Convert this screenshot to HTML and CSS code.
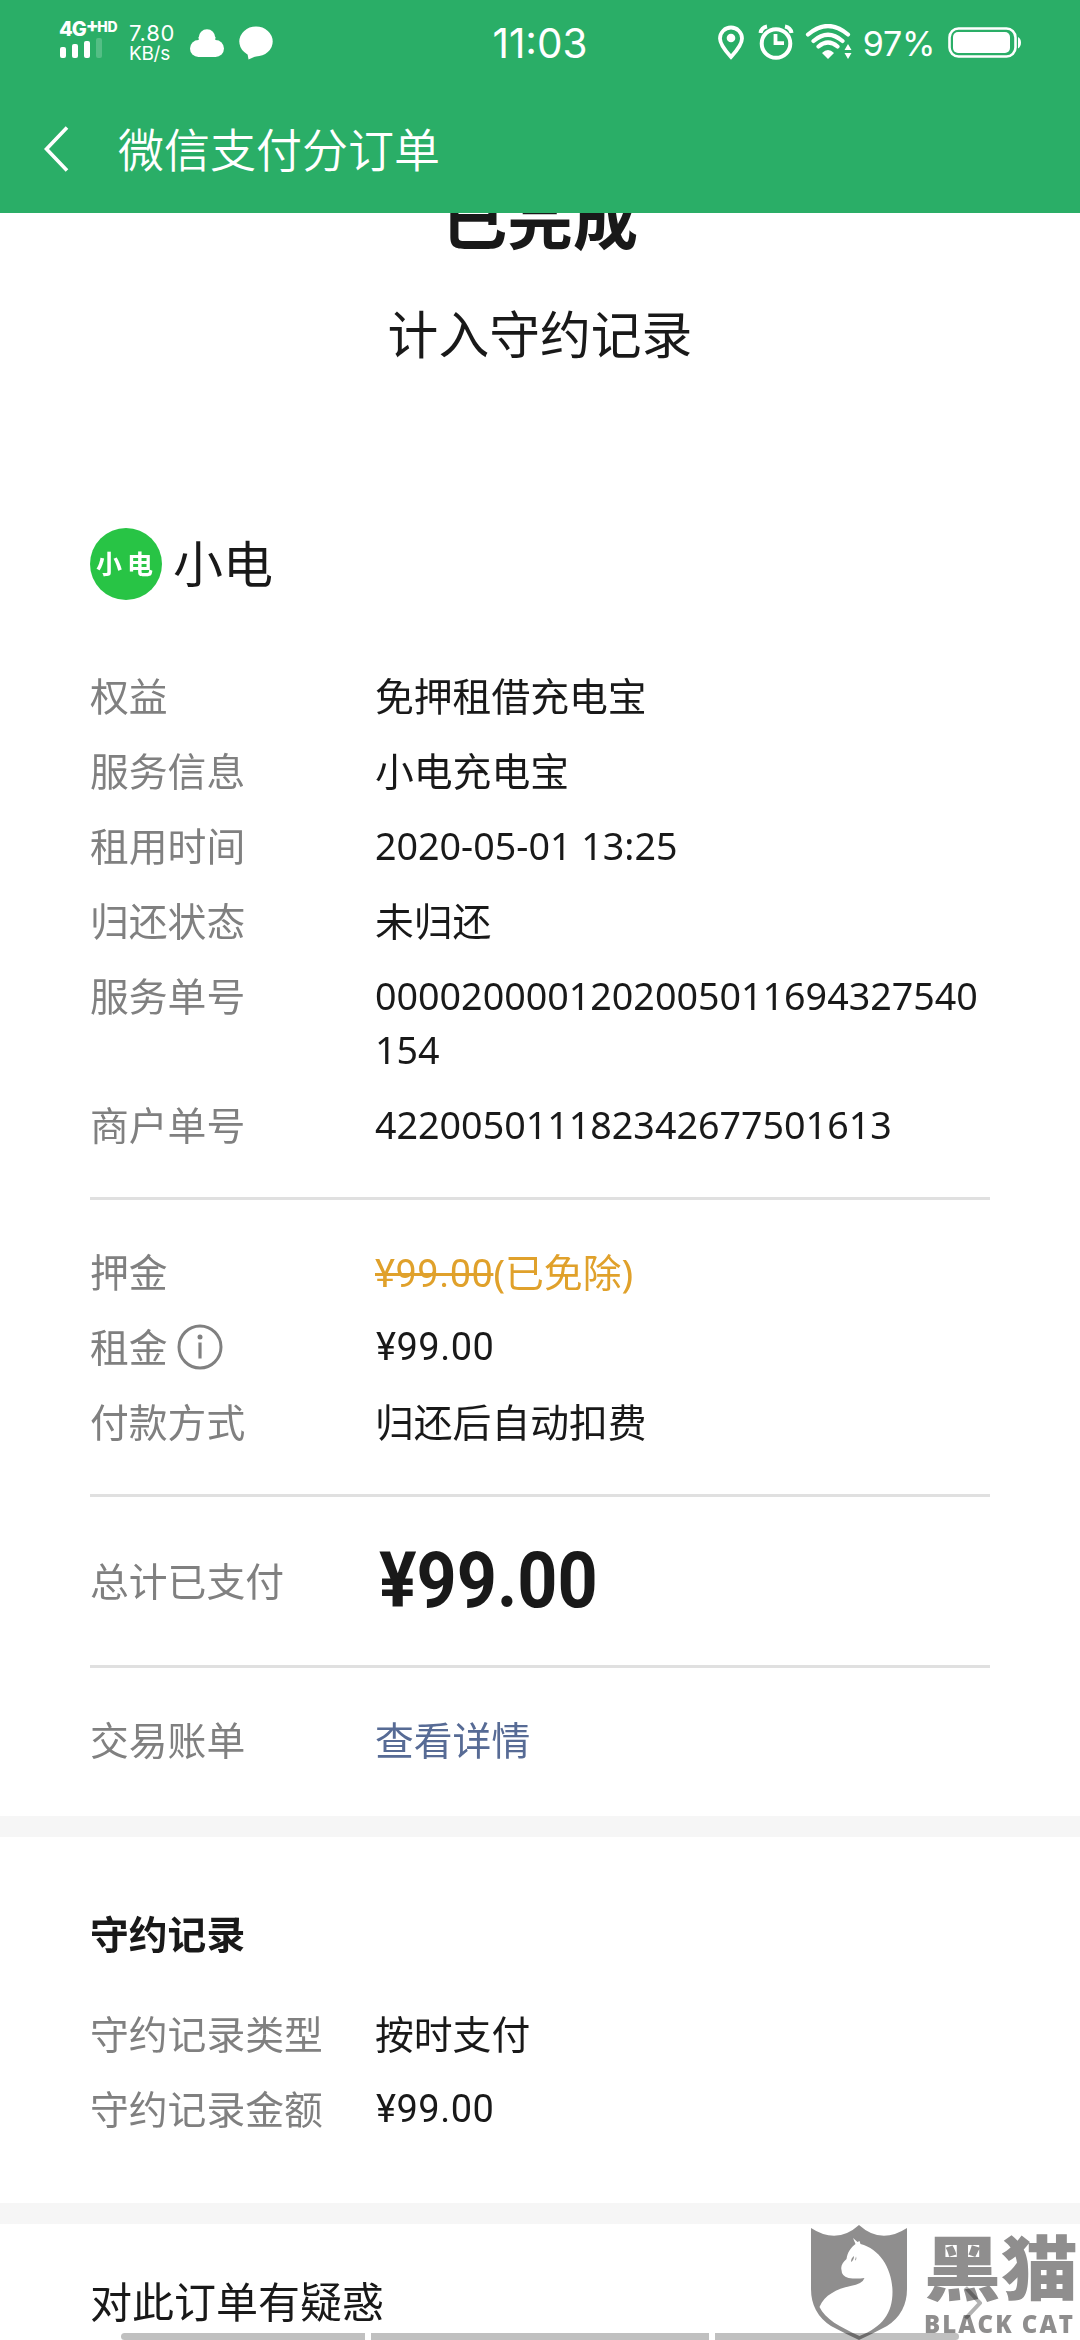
FILE: index.html
```html
<!DOCTYPE html>
<html lang="zh-CN">
<head>
<meta charset="utf-8">
<title>微信支付分订单</title>
<link rel="stylesheet" href="styles.css">
</head>
<body>
<div class="screen">
  <header class="header">
    <div class="status">
      <div class="status-side">
        <div class="signal">
          <div class="network">4G<span class="plus">+</span><span class="hd">HD</span></div>
          <svg class="bars" width="44" height="20" viewBox="0 0 44 20" fill="#fff"><rect x="1" y="9" width="6" height="11" rx="2"/><rect x="13" y="6" width="6" height="14" rx="2"/><rect x="25" y="3" width="6" height="17" rx="2"/><rect x="37" y="0" width="6" height="20" rx="2" opacity=".2"/></svg>
        </div>
        <div class="speed"><span class="rate">7.80</span><span class="unit">KB/s</span></div>
        <svg class="cloud" width="34" height="28" viewBox="0 0 34 28" fill="#fff"><circle cx="17" cy="8.5" r="8.3"/><rect x="0" y="11" width="34" height="17" rx="8.5"/><rect x="8.7" y="8" width="16.6" height="12"/></svg>
        <svg class="bubble" width="34" height="34" viewBox="0 0 34 34" fill="#fff"><ellipse cx="17" cy="15.500" rx="16.700" ry="15"/><path d="M8 25l1.500 8.500 9-4z"/></svg>
      </div>
      <div class="clock">11:03</div>
      <div class="status-side status-right">
        <svg class="pin" width="28" height="36" viewBox="0 0 28 36" fill="none"><path d="M14 32C9.500 27 3 20 3 13.500a11 11 0 0 1 22 0C25 20 18.500 27 14 32z" stroke="#fff" stroke-width="3.800"/><circle cx="14" cy="13" r="4.300" fill="#fff"/></svg>
        <svg class="alarm" width="36" height="36" viewBox="0 0 36 36" fill="none" stroke="#fff"><circle cx="18" cy="19.500" r="14.300" stroke-width="4"/><path d="M17.500 10v9.200H26" stroke-width="3.800"/><path d="M2.500 9Q3.500 3.500 9 2.500M27 2.500q5.500 1 6.500 6.500" stroke-width="4"/></svg>
        <svg class="wifi" width="48" height="36" viewBox="0 0 48 36" fill="none" stroke="#fff" stroke-width="4.200" stroke-linecap="round"><path d="M3 10.500Q23 -6.500 43 10.500M8.500 17Q23 4.500 37.500 17M13.500 22.500Q23 14.500 32.500 22.500"/><path d="M17 29q6-6 12 0l-6 6z" fill="#fff" stroke="none"/><path d="M43 20l3.500 6h-7zM43 35l3.500-6h-7z" fill="#fff" stroke="none"/></svg>
        <span class="percent">97%</span>
        <svg class="battery" width="73" height="32" viewBox="0 0 73 32" fill="none"><rect x="1.500" y="1.500" width="66" height="28" rx="9" stroke="#fff" stroke-width="2.600"/><rect x="5" y="5" width="57" height="21" rx="5" fill="#fff"/><path d="M70 10q3 1.500 3 5.500t-3 6z" fill="#fff"/></svg>
      </div>
    </div>
    <div class="nav">
      <svg class="back" width="26" height="46" viewBox="0 0 26 46" fill="none" stroke="#fff" stroke-width="3.600"><path d="M23 1.500L2.500 23 23 44.500"/></svg>
      <h1 class="title">微信支付分订单</h1>
    </div>
  </header>

  <main class="page">
    <section class="summary">
      <h2 class="state">已完成</h2>
      <p class="note">计入守约记录</p>
    </section>

    <section class="order">
      <div class="merchant"><span class="logo">小电</span><span class="merchant-name">小电</span></div>
      <dl class="rows">
        <div class="row"><dt>权益</dt><dd>免押租借充电宝</dd></div>
        <div class="row"><dt>服务信息</dt><dd>小电充电宝</dd></div>
        <div class="row"><dt>租用时间</dt><dd class="num">2020-05-01 13:25</dd></div>
        <div class="row"><dt>归还状态</dt><dd>未归还</dd></div>
        <div class="row"><dt>服务单号</dt><dd class="num">0000200001202005011694327540154</dd></div>
        <div class="row"><dt>商户单号</dt><dd class="num">422005011182342677501613</dd></div>
      </dl>
      <dl class="rows ruled">
        <div class="row"><dt>押金</dt><dd class="waived"><s class="money">¥99.00</s>(已免除)</dd></div>
        <div class="row"><dt class="with-info">租金<svg class="info" width="46" height="46" viewBox="0 0 46 46" fill="none" stroke="#808080"><circle cx="23" cy="23" r="21" stroke-width="3"/><path d="M23 18.500v16" stroke-width="3.200"/><circle cx="23" cy="13" r="2.500" fill="#808080" stroke="none"/></svg></dt><dd class="money">¥99.00</dd></div>
        <div class="row"><dt>付款方式</dt><dd>归还后自动扣费</dd></div>
      </dl>
      <dl class="rows ruled total">
        <div class="row"><dt>总计已支付</dt><dd class="amount"><span class="amount-text">¥99.00</span></dd></div>
      </dl>
      <dl class="rows ruled bill">
        <div class="row"><dt>交易账单</dt><dd class="link">查看详情</dd></div>
      </dl>
    </section>

    <section class="record">
      <h3 class="record-title">守约记录</h3>
      <dl class="rows">
        <div class="row"><dt>守约记录类型</dt><dd>按时支付</dd></div>
        <div class="row"><dt>守约记录金额</dt><dd class="money">¥99.00</dd></div>
      </dl>
    </section>

    <section class="help">
      <span>对此订单有疑惑</span>
      <svg class="arrow" width="18" height="34" viewBox="0 0 18 34" fill="none" stroke="#b2b2b2" stroke-width="4"><path d="M1.500 1.500L16 17 1.500 32.500"/></svg>
    </section>
  </main>

  <div class="gesture"><i class="g1"></i><i class="g2"></i><i class="g3"></i></div>

  <div class="watermark">
    <svg class="shield" width="98" height="115" viewBox="0 0 98 115"><path d="M1 3Q27 20 49 0q22 20 48 3v61q0 24-20 37-15 8-28 14-13-6-28-14Q1 88 1 64z" fill="#8f8e8e"/><path d="M43 13l4.500 4 2-1 1 3c20 5 32 26 32 48 0 21-10 35-33 44C30 102 15 94 9.500 82c5-12 17-18 31-21q12-2 14-8-8 1-16 0-7-2-7-8c-1-4 1-7 5-11 1-7 4-11 9-15z" fill="#fff"/><path d="M41 37q0-4 3-6 0 4-3 6zM45 35.500q2-1 1-4z" fill="#8f8e8e"/></svg>
    <div class="brand"><span class="brand-cn">黑猫</span><span class="brand-en">BLACK CAT</span></div>
  </div>
</div>
</body>
</html>
```
FILE: styles.css
```css
* { box-sizing: border-box; }
body { margin: 0; background: #fff; }
h1, h2, h3, p, dl, dd { margin: 0; font-size: inherit; font-weight: 400; }

.screen {
  position: relative;
  width: 1080px;
  height: 2340px;
  overflow: hidden;
  display: flex;
  flex-direction: column;
  background: #fff;
  color: #191919;
  font-family: "Noto Sans", "Noto Sans CJK SC", sans-serif;
  font-size: 38.8px;
  line-height: 54px;
}

/* header */
.header { height: 213px; flex: none; background: #2aae67; color: #fff; position: relative; z-index: 1; }
.status {
  height: 84px;
  display: grid;
  grid-template-columns: 1fr auto 1fr;
  padding: 0 59px;
  font-family: Inter, sans-serif;
}
.status-side { display: flex; align-items: flex-start; }
.status-right { justify-content: flex-end; }
.signal { width: 58px; padding-top: 20px; display: flex; flex-direction: column; }
.network { font-size: 20px; line-height: 18px; font-weight: 800; letter-spacing: -1px; white-space: nowrap; height: 18px; display: flex; }
.plus { font-size: 19px; line-height: 12px; letter-spacing: -1.5px; }
.hd { font-size: 14px; line-height: 13px; letter-spacing: -.3px; }
.speed { margin-left: 12px; padding-top: 23px; width: 50px; display: flex; flex-direction: column; }
.rate { font-size: 22px; line-height: 21px; letter-spacing: .8px; }
.unit { font-size: 19px; line-height: 20px; letter-spacing: -.3px; }
.cloud { margin: 29px 0 0 11px; }
.bubble { margin: 26px 0 0 15px; }
.clock { font-size: 40.5px; line-height: 88px; }
.pin { margin-top: 25px; }
.alarm { margin: 24px 0 0 13px; }
.wifi { margin: 24px 0 0 11px; }
.percent { font-size: 34px; line-height: 88px; margin-left: 10px; letter-spacing: -.3px; }
.battery { margin: 27px 0 0 13px; }

.nav { height: 129px; display: flex; align-items: center; padding: 0 0 0 44px; }
.title { font-size: 46px; line-height: 60px; margin-left: 48px; font-weight: 350; }

/* page */
.page { display: flex; flex-direction: column; }
.summary { height: 315px; display: flex; flex-direction: column; align-items: center; }
.state { font-size: 65.5px; line-height: 80px; font-weight: 700; margin-top: -34px; }
.note { font-size: 50.8px; line-height: 70px; margin-top: 41px; }

.order { padding: 0 90px; height: 1288px; }
.merchant { display: flex; align-items: center; height: 72px; margin-bottom: 69px; }
.logo {
  width: 72px; height: 72px; border-radius: 50%;
  background: #28c445; color: #fff;
  padding-left: 6px;
  font-size: 26px; line-height: 72px; font-weight: 700; letter-spacing: 5px; white-space: nowrap;
}
.merchant-name { font-size: 50px; line-height: 72px; margin-left: 11px; }

.rows { display: flex; flex-direction: column; gap: 21px; }
.row { display: flex; align-items: flex-start; }
.row dt { width: 285px; flex: none; color: #808080; }
.row dd { flex: 1; overflow-wrap: anywhere; }
.row .num { font-size: 37.65px; }
.money { font-family: Roboto, sans-serif; font-size: 38px; letter-spacing: .5px; }
dd.money { padding-left: 1px; }
.ruled { border-top: 3px solid #e0e0e0; margin-top: 45px; padding-top: 45px; }
.with-info { display: flex; align-items: center; height: 54px; }
.info { margin: 0 0 0 9px; }
.waived { color: #e0a12b; height: 54px; }
.total .row { align-items: center; height: 78px; }
.amount-text {
  display: inline-block;
  margin-left: 4px;
  font: 700 77px/78px Roboto, sans-serif;
  transform: scaleX(.91);
  transform-origin: left;
}
.link { color: #576b95; }

.record { height: 387px; border-top: 21px solid #f6f6f6; padding: 70px 90px 0; }
.record-title { font-weight: 700; margin-bottom: 46px; }
.help {
  border-top: 21px solid #f6f6f6;
  padding: 48px 98px 0 90px;
  height: 137px;
  display: flex;
  justify-content: space-between;
  font-size: 42px;
  line-height: 60px;
}
.arrow { margin-top: 14px; }

/* gesture hints over the bottom edge */
.gesture { position: absolute; left: 121px; bottom: 0; display: flex; gap: 6px; height: 7px; }
.gesture i { background: #c0c0c0; }
.g1 { width: 244px; border-radius: 4px 0 0 4px; }
.g2 { width: 338px; }
.g3 { width: 244px; border-radius: 0 4px 4px 0; }

/* watermark stamped over the page */
.watermark { position: absolute; left: 810px; top: 2225px; display: flex; color: #8f8e8e; mix-blend-mode: multiply; }
.brand { display: flex; flex-direction: column; margin-left: 16px; }
.brand-cn { font-size: 77px; line-height: 86px; font-weight: 900; transform: scaleY(.92); }
.brand-en { font: 800 24px/25px "Open Sans", sans-serif; letter-spacing: 2px; white-space: nowrap; }
```
